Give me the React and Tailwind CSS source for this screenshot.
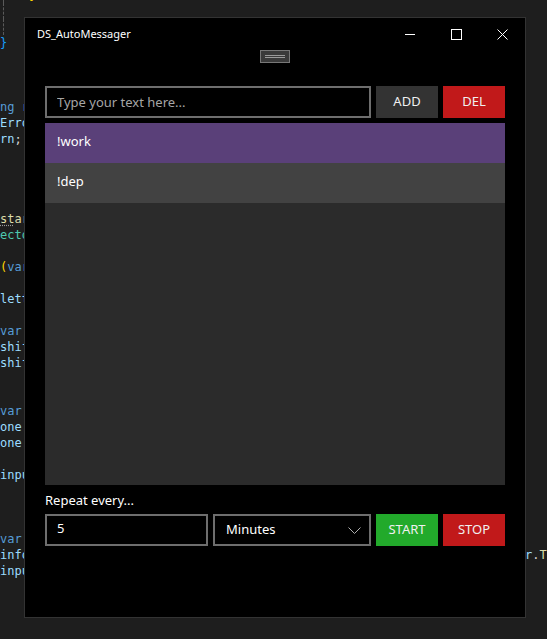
const lines = [
    { k: -1, guide: true, segs: [['}', '#ffd700']], pad: 25 },
    { k: 0, guide: true, segs: [] },
    { k: 1, guide: true, segs: [] },
    { k: 2, segs: [['}', '#179fff']] },
    { k: 6, segs: [['ng r', '#569cd6'], ['esult = ', '#9cdcfe']] },
    { k: 7, segs: [['Error', '#9cdcfe'], ['(message);', '#d4d4d4']] },
    { k: 8, segs: [['rn', '#9cdcfe'], [';', '#d4d4d4']] },
    { k: 13, segs: [['st', '#dcdcaa', true], ['art', '#dcdcaa']] },
    { k: 14, segs: [['ector', '#4ec9b0']] },
    { k: 16, segs: [['(', '#ffd700'], ['var', '#569cd6']] },
    { k: 18, segs: [['letter', '#9cdcfe']] },
    { k: 20, segs: [['var ', '#569cd6'], ['key', '#9cdcfe']] },
    { k: 21, segs: [['shift', '#9cdcfe']] },
    { k: 22, segs: [['shift', '#9cdcfe']] },
    { k: 25, segs: [['var ', '#569cd6'], ['one', '#9cdcfe']] },
    { k: 26, segs: [['one.', '#9cdcfe']] },
    { k: 27, segs: [['one.', '#9cdcfe']] },
    { k: 29, segs: [['input', '#9cdcfe']] },
    { k: 33, segs: [['var ', '#569cd6'], ['info', '#9cdcfe']] },
    { k: 34, segs: [['info', '#9cdcfe']], tail: true },
    { k: 35, segs: [['input', '#9cdcfe']] },
];

function CodeLine({ line }) {
    if (!line) return <div className="h-[16px]" />;
    return (
        <div className="flex h-[16px] items-center whitespace-pre">
            <div
                className={
                    line.guide
                        ? 'ml-[3px] h-[16px] w-[522px] shrink-0 overflow-hidden border-l border-dashed border-[#5a5a5a]'
                        : 'w-[525px] shrink-0 overflow-hidden'
                }
                style={line.pad ? { paddingLeft: line.pad } : undefined}
            >
                {line.segs.map(([text, color, dotted], i) => (
                    <span
                        key={i}
                        style={{ color }}
                        className={dotted ? 'underline decoration-dotted decoration-[#9a9a9a] underline-offset-2' : ''}
                    >
                        {text}
                    </span>
                ))}
            </div>
            {line.tail && (
                <span className="shrink-0">
                    <span className="text-[#9cdcfe]">r</span>
                    <span className="text-[#d4d4d4]">.</span>
                    <span className="text-[#dcdcaa]">ToString</span>
                    <span className="text-[#d4d4d4]">();</span>
                </span>
            )}
        </div>
    );
}

function Editor() {
    const rows = [];
    for (let k = -1; k <= 37; k++) {
        rows.push(<CodeLine key={k} line={lines.find((l) => l.k === k)} />);
    }
    return (
        <div className="-mt-[13px] text-[12px] leading-[16px]" style={{ fontFamily: '"DejaVu Sans Mono", "Liberation Mono", monospace' }}>
            {rows}
        </div>
    );
}

function CaptionButton({ children }) {
    return <div className="flex h-[32px] w-[46px] items-center justify-center">{children}</div>;
}

function Btn({ label, color }) {
    return (
        <button type="button" className={`h-[32px] w-[62px] shrink-0 pb-[1px] text-[13px] text-[#f0f0f0] ${color}`}>
            {label}
        </button>
    );
}

function Window() {
    return (
        <div className="absolute left-[24px] top-[17px] flex h-[601px] w-[502px] flex-col border border-[#333] bg-black text-white">
            <div className="flex h-[32px] items-center">
                <div className="flex-1 pl-[12px] text-[11px]">DS_AutoMessager</div>
                <CaptionButton>
                    <svg width="10" height="10" viewBox="0 0 10 10">
                        <path d="M0 5.5h10" stroke="#fff" strokeWidth="1" />
                    </svg>
                </CaptionButton>
                <CaptionButton>
                    <svg width="11" height="11" viewBox="0 0 11 11">
                        <rect x="0.5" y="0.5" width="10" height="10" fill="none" stroke="#fff" strokeWidth="1" />
                    </svg>
                </CaptionButton>
                <CaptionButton>
                    <svg width="11" height="11" viewBox="0 0 11 11">
                        <path d="M0.5 0.5l10 10M10.5 0.5l-10 10" stroke="#fff" strokeWidth="1" />
                    </svg>
                </CaptionButton>
            </div>
            <div className="flex justify-center">
                <div className="flex h-[13px] w-[30px] flex-col items-center justify-center gap-[1px] border border-[#777] bg-[#3a3a3a]">
                    <div className="h-px w-[20px] bg-[#9a9a9a]" />
                    <div className="h-px w-[20px] bg-[#9a9a9a]" />
                </div>
            </div>
            <div className="mt-[23px] flex flex-col px-[20px]">
                <div className="flex gap-[5px]">
                    <input
                        type="text"
                        placeholder="Type your text here..."
                        className="h-[32px] min-w-0 flex-1 border-2 border-[#6e6e6e] bg-black px-[10px] pb-[1px] text-[13px] text-white outline-none placeholder:text-[#a6a6a6]"
                    />
                    <Btn label="ADD" color="bg-[#333333]" />
                    <Btn label="DEL" color="bg-[#c1191a]" />
                </div>
                <div className="mt-[5px] flex h-[362px] flex-col bg-[#2b2b2b]">
                    <div className="flex h-[40px] items-center bg-[#5a4079] px-[12px] pb-[2px] text-[13px]">!work</div>
                    <div className="flex h-[40px] items-center bg-[#424242] px-[12px] pb-[2px] text-[13px]">!dep</div>
                </div>
                <div className="flex h-[29px] items-center pt-[2px] text-[13px]">Repeat every...</div>
                <div className="flex gap-[5px]">
                    <div className="flex h-[32px] w-[163px] items-center border-2 border-[#6e6e6e] px-[10px] pb-[2px] text-[13px]">5</div>
                    <div className="flex h-[32px] w-[158px] items-center justify-between border-2 border-[#6e6e6e] pl-[11px] pr-[8px] text-[13px]">
                        <span className="pb-[1px]">Minutes</span>
                        <svg width="13" height="7" viewBox="0 0 13 7">
                            <path d="M0.5 0.5l6 6 6-6" fill="none" stroke="#b0b0b0" strokeWidth="1" />
                        </svg>
                    </div>
                    <Btn label="START" color="bg-[#22aa2b]" />
                    <Btn label="STOP" color="bg-[#c1191a]" />
                </div>
            </div>
        </div>
    );
}

export default function App() {
    return (
        <div className="relative h-[639px] w-[547px] overflow-hidden bg-[#1e1e1e]" style={{ fontFamily: '"Noto Sans", "Open Sans", sans-serif' }}>
            <Editor />
            <Window />
        </div>
    );
}
